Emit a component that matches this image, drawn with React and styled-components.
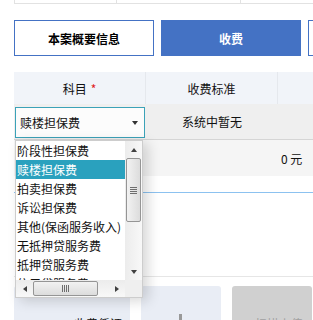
import React from 'react';
import styled, { createGlobalStyle } from 'styled-components';

const GlobalStyle = createGlobalStyle`
  body {
    margin: 0;
    background: #fff;
    font-family: "Noto Sans CJK SC", "Noto Sans", sans-serif;
    color: #111;
  }
`;

const Page = styled.div`
  position: relative;
  width: 313px;
  height: 320px;
  overflow: hidden;
  padding-left: 14px;
  box-sizing: border-box;
`;

const Inner = styled.div`
  width: 420px;
`;

// 上部の表の名残り
const TopStrip = styled.div`
  display: flex;
  height: 3px;
  border-bottom: 1px solid #e2e2e2;
  border-left: 1px solid #e2e2e2;
`;

const StripCell = styled.div`
  width: ${p => p.w ? `${p.w}px` : 'auto'};
  flex: ${p => p.w ? 'none' : 1};
  border-right: 1px solid #e2e2e2;
`;

const TabRow = styled.div`
  display: flex;
  gap: 7px;
  margin-top: 16px;
`;

const TabButton = styled.div`
  width: 140px;
  height: 36px;
  box-sizing: border-box;
  border: 1px solid #4472c4;
  background: ${p => p.active ? '#4472c4' : '#fff'};
  color: ${p => p.active ? '#fff' : '#000'};
  font-size: 12px;
  font-weight: bold;
  display: flex;
  align-items: center;
  justify-content: center;
  flex: none;
`;

const Grid = styled.div`
  display: grid;
  grid-template-columns: 132px 132px 1fr;
`;

const HeadRow = styled(Grid)`
  margin-top: 16px;
  height: 32px;
  background: #f1f4f9;
`;

const HeadCell = styled.div`
  display: flex;
  align-items: center;
  justify-content: center;
  font-size: 12px;
  border-right: 1px solid #e5e8ed;
`;

const Req = styled.span`
  color: #e02020;
  margin-left: 4px;
`;

const SelectRow = styled(Grid)`
  height: 35px;
  background: #efefef;
  border-bottom: 1px solid #d5d5d5;
`;

const AmountRow = styled(Grid)`
  height: 36px;
  background: #f5f5f5;
`;

const Cell = styled.div`
  display: flex;
  align-items: center;
  justify-content: ${p => p.align || 'center'};
  padding-left: ${p => p.pad || 0}px;
  font-size: 12px;
`;

const SelectBox = styled.div`
  margin: 3px 0 0 1px;
  width: 130px;
  height: 31px;
  box-sizing: border-box;
  border: 1px solid #3ba2b8;
  background: #fcfcfc;
  display: flex;
  align-items: center;
  justify-content: space-between;
  padding: 0 6px 0 4px;
  font-size: 12px;
`;

const Caret = styled.span`
  width: 0;
  height: 0;
  border-left: 3px solid transparent;
  border-right: 3px solid transparent;
  border-top: 4px solid #333;
`;

const BlueLine = styled.div`
  margin-top: 16px;
  height: 1px;
  background: #8cc2f0;
`;

const GreyLine = styled.div`
  margin-top: 83px;
  height: 1px;
  background: #e6e6e6;
`;

const CardRow = styled.div`
  display: flex;
  gap: 11px;
  margin-top: 9px;
`;

const Card = styled.div`
  flex: none;
  width: ${p => p.w}px;
  height: 60px;
  border-radius: 3px;
  background: ${p => p.grey ? '#d0d0d0' : '#e9edf5'};
  color: ${p => p.grey ? '#a0a0a0' : '#111'};
  font-size: 12px;
  line-height: 17px;
  display: flex;
  justify-content: ${p => p.right ? 'flex-end' : 'center'};
  padding: 29px ${p => p.right ? 8 : 0}px 0 ${p => p.grey ? 14 : 0}px;
  box-sizing: border-box;
  position: relative;
`;

const PlusV = styled.span`
  position: absolute;
  left: 38px;
  top: 28px;
  width: 3px;
  height: 22px;
  background: #999;
`;

// ドロップダウン（開いた状態）
const Dropdown = styled.div`
  position: absolute;
  left: 15px;
  top: 140px;
  width: 128px;
  height: 158px;
  box-sizing: border-box;
  border: 1px solid #cdcdcd;
  background: #fff;
  box-shadow: 5px 3px 12px rgba(0, 0, 0, 0.16);
  display: grid;
  grid-template-columns: 1fr 17px;
  grid-template-rows: 1fr 17px;
`;

const List = styled.div`
  overflow: hidden;
`;

const Option = styled.div`
  height: 19px;
  line-height: 19px;
  padding-left: 1px;
  font-size: 12px;
  white-space: nowrap;
  background: ${p => p.selected ? '#2aa1be' : 'transparent'};
  color: ${p => p.selected ? '#fff' : '#111'};
`;

const VScroll = styled.div`
  display: flex;
  flex-direction: column;
  background: linear-gradient(to right, #ececec, #f8f8f8);
`;

const HScroll = styled.div`
  display: flex;
  background: linear-gradient(to bottom, #ececec, #f8f8f8);
`;

const Corner = styled.div`
  background: #efefef;
`;

const ArrowBtn = styled.div`
  flex: none;
  width: 17px;
  height: 17px;
  display: flex;
  align-items: center;
  justify-content: center;
`;

const Tri = styled.span`
  width: 0;
  height: 0;
  ${p => p.dir === 'up' && `border-left: 3.5px solid transparent; border-right: 3.5px solid transparent; border-bottom: 4px solid #404040;`}
  ${p => p.dir === 'down' && `border-left: 3.5px solid transparent; border-right: 3.5px solid transparent; border-top: 4px solid #404040;`}
  ${p => p.dir === 'left' && `border-top: 3.5px solid transparent; border-bottom: 3.5px solid transparent; border-right: 4px solid #404040;`}
  ${p => p.dir === 'right' && `border-top: 3.5px solid transparent; border-bottom: 3.5px solid transparent; border-left: 4px solid #404040;`}
`;

const Thumb = styled.div`
  flex: none;
  box-sizing: border-box;
  border: 1px solid #959595;
  border-radius: 2px;
  display: flex;
  flex-direction: ${p => p.vertical ? 'column' : 'row'};
  align-items: center;
  justify-content: center;
  gap: 1px;
  ${p => p.vertical ? `
    width: 15px;
    height: 64px;
    margin: 0 1px;
    background: linear-gradient(to right, #f2f2f2, #dcdcdc);
  ` : `
    width: 65px;
    height: 15px;
    margin: 1px 0;
    background: linear-gradient(to bottom, #f2f2f2, #dcdcdc);
  `}
`;

const Grip = styled.span`
  background: #6e6e6e;
  ${p => p.vertical ? 'width: 7px; height: 1px;' : 'width: 1px; height: 7px;'}
`;

const Track = styled.div`
  flex: 1;
`;

const options = [
  '阶段性担保费',
  '赎楼担保费',
  '拍卖担保费',
  '诉讼担保费',
  '其他(保函服务收入)',
  '无抵押贷服务费',
  '抵押贷服务费',
  '信用贷服务费',
];

export default function App() {
  return (
    <Page>
      <GlobalStyle />
      <Inner>
        <TopStrip>
          <StripCell w={101} />
          <StripCell w={123} />
          <StripCell />
        </TopStrip>

        <TabRow>
          <TabButton>本案概要信息</TabButton>
          <TabButton active>收费</TabButton>
          <TabButton />
        </TabRow>

        <HeadRow>
          <HeadCell>科目<Req>*</Req></HeadCell>
          <HeadCell>收费标准</HeadCell>
          <HeadCell />
        </HeadRow>

        <SelectRow>
          <div>
            <SelectBox>
              <span>赎楼担保费</span>
              <Caret />
            </SelectBox>
          </div>
          <Cell>系统中暂无</Cell>
          <Cell />
        </SelectRow>

        <AmountRow>
          <Cell />
          <Cell />
          <Cell align="flex-start" pad={3}>0 元</Cell>
        </AmountRow>

        <BlueLine />
        <GreyLine />

        <CardRow>
          <Card w={116} right>收费凭证</Card>
          <Card w={80}><PlusV /></Card>
          <Card w={80} grey>扫描上传</Card>
        </CardRow>
      </Inner>

      <Dropdown>
        <List>
          {options.map((o, i) => (
            <Option key={o} selected={i === 1}>{o}</Option>
          ))}
        </List>
        <VScroll>
          <ArrowBtn><Tri dir="up" /></ArrowBtn>
          <Thumb vertical>
            <Grip vertical /><Grip vertical /><Grip vertical /><Grip vertical />
          </Thumb>
          <Track />
          <ArrowBtn><Tri dir="down" /></ArrowBtn>
        </VScroll>
        <HScroll>
          <ArrowBtn><Tri dir="left" /></ArrowBtn>
          <Thumb>
            <Grip /><Grip /><Grip /><Grip />
          </Thumb>
          <Track />
          <ArrowBtn><Tri dir="right" /></ArrowBtn>
        </HScroll>
        <Corner />
      </Dropdown>
    </Page>
  );
}
